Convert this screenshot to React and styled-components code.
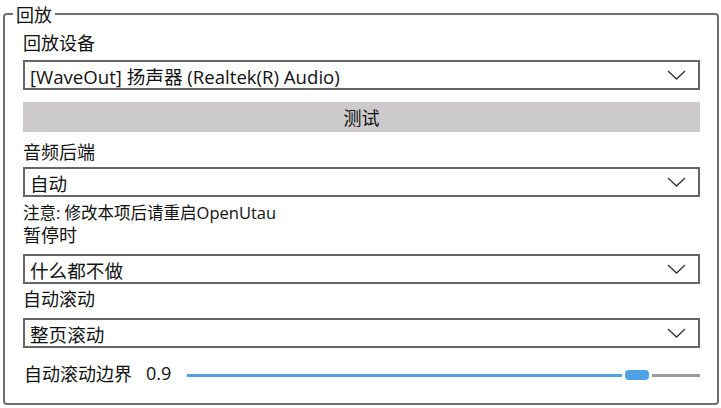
import styled, { createGlobalStyle } from "styled-components";

const GlobalStyle = createGlobalStyle`
  html, body {
    margin: 0;
    padding: 0;
    background: #ffffff;
  }
  body {
    font-family: "Open Sans", "Noto Sans CJK SC", sans-serif;
    color: #111;
  }
`;

const Chevron = () => (
  <svg width="19" height="10" viewBox="0 0 19 10">
    <polyline points="1,1 9.5,9 18,1" fill="none" stroke="#333" strokeWidth="1.3" />
  </svg>
);

export default function App() {
  return (
    <Page>
      <GlobalStyle />
      <Group>
        <Legend>回放</Legend>
        <Content>
          <Label>回放设备</Label>
          <Combo $mt={6}>
            <ComboText>[WaveOut] 扬声器 (Realtek(R) Audio)</ComboText>
            <Chevron />
          </Combo>
          <TestButton>测试</TestButton>

          <Label $mt={9}>音频后端</Label>
          <Combo $mt={4}>
            <ComboText>自动</ComboText>
            <Chevron />
          </Combo>
          <Note>注意: 修改本项后请重启OpenUtau</Note>
          <Label>暂停时</Label>
          <Combo $mt={8}>
            <ComboText>什么都不做</ComboText>
            <Chevron />
          </Combo>

          <Label $mt={4}>自动滚动</Label>
          <Combo $mt={8}>
            <ComboText>整页滚动</ComboText>
            <Chevron />
          </Combo>

          <SliderRow>
            <SliderLabel>自动滚动边界</SliderLabel>
            <SliderValue>0.9</SliderValue>
            <Track>
              <Filled style={{ flexGrow: 0.9 }} />
              <Thumb />
              <Rest style={{ flexGrow: 0.1 }} />
            </Track>
          </SliderRow>
        </Content>
      </Group>
    </Page>
  );
}

const Page = styled.div`
  width: 721px;
  height: 408px;
  padding: 4px 2px 0 3px;
  box-sizing: border-box;
`;

const Group = styled.fieldset`
  margin: 0;
  padding: 0 0 0 8px;
  border: 2px solid #6e6e6e;
  border-radius: 4px;
  height: 401px;
  box-sizing: border-box;
`;

const Legend = styled.legend`
  padding: 0 3px;
  font-size: 18px;
  line-height: 20px;
  font-family: "Noto Sans CJK SC", sans-serif;
`;

const Content = styled.div`
  padding: 8px 17px 0 10px;
  display: flex;
  flex-direction: column;
`;

const Label = styled.div`
  margin-top: ${(p) => p.$mt || 0}px;
  font-size: 18px;
  line-height: 22px;
  height: 22px;
  white-space: nowrap;
`;

const Note = styled(Label)`
  margin-top: 5px;
  font-size: 16.5px;
`;

const Combo = styled.div`
  margin-top: ${(p) => p.$mt || 0}px;
  height: 30px;
  box-sizing: border-box;
  border: 2px solid #666;
  display: flex;
  align-items: center;
  justify-content: space-between;
  padding: 0 12px 0 5px;
`;

const ComboText = styled.span`
  font-size: 18.6px;
  white-space: nowrap;
`;

const TestButton = styled.div`
  margin-top: 12px;
  height: 30px;
  background: #cccaca;
  display: flex;
  align-items: center;
  justify-content: center;
  font-size: 18px;
  font-family: "Noto Sans CJK SC", sans-serif;
`;

const SliderRow = styled.div`
  margin-top: 14px;
  height: 22px;
  display: flex;
  align-items: center;
`;

const SliderLabel = styled.span`
  font-size: 18px;
  margin-left: 1px;
`;

const SliderValue = styled.span`
  font-size: 18px;
  margin-left: 14px;
  width: 41px;
`;

const Track = styled.div`
  flex: 1;
  display: flex;
  align-items: center;
  margin-top: 4px;
`;

const Filled = styled.div`
  height: 3px;
  background: #4ea1e4;
`;

const Rest = styled.div`
  height: 3px;
  background: #9d9a9c;
`;

const Thumb = styled.div`
  width: 24px;
  height: 10px;
  border-radius: 4px;
  background: #4ea1e4;
  margin: 0 3px;
`;
